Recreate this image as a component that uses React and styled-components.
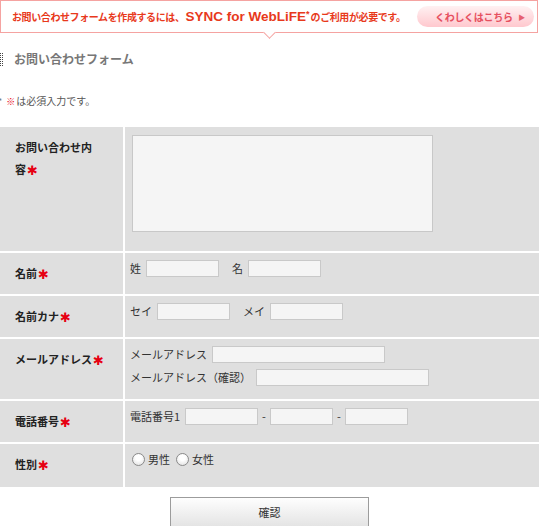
import React from 'react'
import styled, { createGlobalStyle } from 'styled-components'

const GlobalStyle = createGlobalStyle`
  body {
    margin: 0;
    background: #fff;
    font-family: "Noto Sans CJK JP", "Noto Sans", sans-serif;
    color: #333;
  }
`

const pink = '#f5a3a1'

const Page = styled.div`
  width: 539px;
`

const Banner = styled.div`
  position: relative;
  box-sizing: border-box;
  width: 538px;
  height: 33px;
  border: 1px solid ${pink};
  display: flex;
  align-items: center;
  justify-content: space-between;
  padding: 0 3px 0 11px;

  &::after {
    content: '';
    position: absolute;
    left: 264px;
    top: 27px;
    width: 8px;
    height: 8px;
    background: #fff;
    border-right: 1px solid ${pink};
    border-bottom: 1px solid ${pink};
    transform: rotate(45deg);
  }
`

const BannerText = styled.p`
  margin: 0;
  color: #e8391c;
  font-size: 10px;
  font-weight: bold;
  line-height: 16px;
  letter-spacing: -0.4px;
  white-space: nowrap;
`

const Brand = styled.span`
  font-family: "Liberation Sans", Arial, sans-serif;
  font-size: 13.5px;
  letter-spacing: 0;
  margin: 0 1px;

  sup {
    font-size: 9px;
    vertical-align: 4px;
    line-height: 0;
  }
`

const DetailButton = styled.a`
  box-sizing: border-box;
  width: 117px;
  height: 21px;
  border-radius: 11px;
  background: linear-gradient(#fff1f2, #ffc8ce);
  color: #e6505f;
  font-size: 10px;
  font-weight: bold;
  display: flex;
  align-items: center;
  justify-content: space-between;
  padding: 0 9px 0 18px;
  text-decoration: none;
  letter-spacing: -0.3px;
`

const Arrow = styled.span`
  font-size: 7px;
  color: #e66070;
`

const Heading = styled.h2`
  margin: 18px 0 0;
  height: 16px;
  display: flex;
  align-items: center;
  gap: 11px;
  font-size: 12px;
  line-height: 16px;
  font-weight: bold;
  color: #777;

  &::before {
    content: '';
    width: 1px;
    height: 13px;
    border-left: 1px dotted #444;
    border-right: 1px dotted #444;
  }
`

const Note = styled.p`
  margin: 27px 0 0 -2px;
  font-size: 10px;
  line-height: 14px;
  color: #555;
`

const NoteMark = styled.span`
  color: ${({ $red }) => ($red ? '#e60012' : '#777')};
  font-size: 9px;
  margin-right: ${({ $red }) => ($red ? '1px' : '4px')};
`

const FormTable = styled.div`
  margin-top: 18px;
  display: grid;
  grid-template-columns: 123px 1fr;
  gap: 2px;
  background: #fff;
`

const LabelCell = styled.div`
  background: #dfdfdf;
  padding: 9px 10px ${({ $pb }) => $pb || 10}px 15px;
  font-size: 11px;
  line-height: 22px;
  font-weight: bold;
  color: #222;
`

const Required = styled.span`
  display: inline-block;
  color: #e60012;
  font-family: "DejaVu Sans", sans-serif;
  font-size: 13px;
  line-height: 1;
  margin-left: 1px;
  vertical-align: -1px;
`

const FieldCell = styled.div`
  background: #dfdfdf;
  padding: ${({ $area }) => ($area ? '8px 7px 19px' : '7px 5px 13px')};
  font-size: 11px;
  line-height: 17px;
  color: #333;
`

const FieldLine = styled.div`
  display: flex;
  align-items: center;
  gap: 5px;
  height: 17px;

  & + & {
    margin-top: 6px;
  }
`

const Sub = styled.span`
  margin-left: ${({ $gap }) => $gap || 0}px;
  white-space: nowrap;
`

const Dash = styled.span`
  margin: 0 -1px;
`

const TextInput = styled.input`
  box-sizing: border-box;
  width: ${({ $w }) => $w}px;
  height: 17px;
  margin: 0;
  padding: 0 2px;
  border: 1px solid #c9c9c9;
  background: #f5f5f5;
`

const TextArea = styled.textarea`
  display: block;
  box-sizing: border-box;
  width: 301px;
  height: 97px;
  margin: 0;
  border: 1px solid #c8c8c8;
  background: #f5f5f5;
  resize: none;
`

const RadioGroup = styled.div`
  display: flex;
  align-items: center;
  gap: 6px;
  height: 17px;
  padding-left: 2px;
`

const RadioLabel = styled.label`
  display: flex;
  align-items: center;
  gap: 3px;
`

const Radio = styled.input`
  appearance: none;
  width: 13px;
  height: 13px;
  margin: 0;
  border: 1px solid #8a8a8a;
  border-radius: 50%;
  background: radial-gradient(circle at 50% 35%, #fff 30%, #dcdcdc 100%);
`

const SubmitButton = styled.button`
  display: block;
  margin: 10px auto 0;
  width: 199px;
  height: 30px;
  border: 1px solid #9c9c9c;
  background: linear-gradient(#fefefe, #e4e4e4);
  font-family: "Noto Sans CJK JP", sans-serif;
  font-size: 11px;
  color: #333;
`

const Req = () => <Required>✱</Required>

export default function App() {
  return (
    <Page>
      <GlobalStyle />
      <Banner>
        <BannerText>
          お問い合わせフォームを作成するには、
          <Brand>
            SYNC for WebLiFE<sup>*</sup>
          </Brand>
          のご利用が必要です。
        </BannerText>
        <DetailButton href="#">
          くわしくはこちら<Arrow>▶</Arrow>
        </DetailButton>
      </Banner>

      <Heading>お問い合わせフォーム</Heading>

      <Note>
        <NoteMark>*</NoteMark>
        <NoteMark $red>※</NoteMark>は必須入力です。
      </Note>

      <FormTable>
        <LabelCell>
          お問い合わせ内
          <br />
          容<Req />
        </LabelCell>
        <FieldCell $area>
          <TextArea />
        </FieldCell>

        <LabelCell>
          名前<Req />
        </LabelCell>
        <FieldCell>
          <FieldLine>
            <Sub>姓</Sub>
            <TextInput $w={73} />
            <Sub $gap={8}>名</Sub>
            <TextInput $w={73} />
          </FieldLine>
        </FieldCell>

        <LabelCell>
          名前カナ<Req />
        </LabelCell>
        <FieldCell>
          <FieldLine>
            <Sub>セイ</Sub>
            <TextInput $w={73} />
            <Sub $gap={8}>メイ</Sub>
            <TextInput $w={73} />
          </FieldLine>
        </FieldCell>

        <LabelCell>
          メールアドレス<Req />
        </LabelCell>
        <FieldCell>
          <FieldLine>
            <Sub>メールアドレス</Sub>
            <TextInput $w={173} />
          </FieldLine>
          <FieldLine>
            <Sub>メールアドレス（確認）</Sub>
            <TextInput $w={173} />
          </FieldLine>
        </FieldCell>

        <LabelCell>
          電話番号<Req />
        </LabelCell>
        <FieldCell>
          <FieldLine>
            <Sub>電話番号1</Sub>
            <TextInput $w={73} />
            <Dash>-</Dash>
            <TextInput $w={63} />
            <Dash>-</Dash>
            <TextInput $w={63} />
          </FieldLine>
        </FieldCell>

        <LabelCell $pb={12}>
          性別<Req />
        </LabelCell>
        <FieldCell>
          <RadioGroup>
            <RadioLabel>
              <Radio type="radio" name="sex" />
              男性
            </RadioLabel>
            <RadioLabel>
              <Radio type="radio" name="sex" />
              女性
            </RadioLabel>
          </RadioGroup>
        </FieldCell>
      </FormTable>

      <SubmitButton type="button">確認</SubmitButton>
    </Page>
  )
}
